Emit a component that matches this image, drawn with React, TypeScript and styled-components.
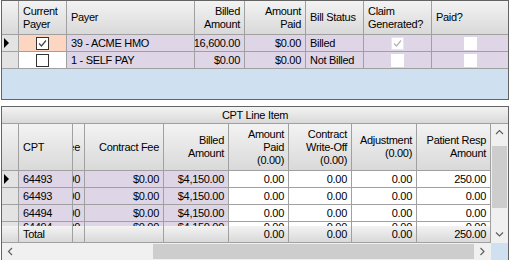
import React from "react";
import styled, { createGlobalStyle, css } from "styled-components";

const LINE = "#a0a0a0";
const FRAME = "#646464";
const LAVENDER = "#ded6e6";
const PEACH = "#fcd6c0";
const EMPTY = "#cfe0f1";
const ROWHEAD = "#e3e3e3";
const HEAD_BG = "linear-gradient(to bottom, #f3f3f3, #d9d9d9)";

const TOP_COLS = "17px 48px 128px 50px 61px 58px 68px 76px";
const CPT_COLS = "17px 54px 12px 79px 65px 60px 63px 65px 74px";

const GlobalStyle = createGlobalStyle`
  body {
    margin: 0;
    background: #ffffff;
    font-family: "Liberation Sans", Arial, sans-serif;
    font-size: 11px;
    letter-spacing: -0.3px;
    color: #000;
  }
  * { box-sizing: border-box; }
`;

type Align = "left" | "right" | "center";
type Check = "checked" | "unchecked" | "disabled" | "plain";

const Page = styled.div`
  width: 510px;
  padding-left: 1px;
  display: flex;
  flex-direction: column;
  gap: 6px;
`;

const Frame = styled.div<{ $h: number }>`
  width: 508px;
  height: ${(p) => p.$h}px;
  border: 1px solid ${FRAME};
  display: flex;
  flex-direction: column;
  overflow: hidden;
`;

const Row = styled.div<{ $cols: string; $h: number }>`
  display: grid;
  grid-template-columns: ${(p) => p.$cols};
  height: ${(p) => p.$h}px;
  flex-shrink: 0;
  overflow: hidden;
`;

const Cell = styled.div<{ $align?: Align; $bg?: string; $last?: boolean }>`
  display: flex;
  align-items: center;
  justify-content: ${(p) =>
    p.$align === "right" ? "flex-end" : p.$align === "center" ? "center" : "flex-start"};
  text-align: ${(p) => p.$align || "left"};
  padding: 0 4px;
  white-space: nowrap;
  overflow: hidden;
  background: ${(p) => p.$bg || "#ffffff"};
  border-bottom: 1px solid ${LINE};
  border-right: ${(p) => (p.$last ? "none" : `1px solid ${LINE}`)};
  line-height: 13px;
`;

const HeadCell = styled(Cell)`
  background: ${HEAD_BG};
  white-space: normal;
`;

const RowHead = styled(Cell)`
  background: ${ROWHEAD};
  padding: 0 0 0 2px;
`;

const PartialRow = styled(Row)`
  ${Cell} {
    align-items: flex-start;
    line-height: 8px;
    padding-top: 1px;
    border-bottom: none;
  }
`;

const Filler = styled.div`
  flex: 1;
  background: ${EMPTY};
`;

const Band = styled.div`
  height: 17px;
  flex-shrink: 0;
  background: ${HEAD_BG};
  border-bottom: 1px solid ${LINE};
  display: flex;
  align-items: center;
  justify-content: center;
`;

const Body = styled.div`
  display: flex;
  height: 119px;
  flex-shrink: 0;
`;

const TableArea = styled.div`
  flex: 1;
  display: flex;
  flex-direction: column;
  overflow: hidden;
`;

const VScroll = styled.div`
  width: 17px;
  display: flex;
  flex-direction: column;
  background: #f0f0f0;
`;

const HScroll = styled.div`
  height: 17px;
  display: flex;
  flex-shrink: 0;
  background: #f0f0f0;
`;

const ArrowBtn = styled.div<{ $v?: boolean }>`
  width: 17px;
  height: 17px;
  flex-shrink: 0;
  display: flex;
  align-items: center;
  justify-content: center;
`;

const Track = styled.div<{ $v?: boolean; $start: number; $size?: number }>`
  flex: 1;
  display: flex;
  flex-direction: ${(p) => (p.$v ? "column" : "row")};
  ${(p) =>
    p.$v
      ? css`
          padding: ${p.$start}px 1px 0 1px;
        `
      : css`
          padding: 1px 0 1px ${p.$start}px;
        `}
`;

const Thumb = styled.div<{ $size?: number }>`
  background: #cdcdcd;
  ${(p) => (p.$size ? `flex: 0 0 ${p.$size}px;` : "flex: 1;")}
`;

const Corner = styled.div`
  width: 17px;
  background: ${EMPTY};
`;

const Box = styled.span<{ $kind: Check }>`
  width: 13px;
  height: 13px;
  display: block;
  background: #ffffff;
  border: 1px solid
    ${(p) =>
      p.$kind === "checked" || p.$kind === "unchecked"
        ? "#333333"
        : p.$kind === "disabled"
        ? "#e6e6e6"
        : "#ffffff"};
  svg {
    display: block;
  }
`;

function CheckBox({ kind }: { kind: Check }) {
  const stroke = kind === "checked" ? "#444444" : "#b4b4b4";
  return (
    <Box $kind={kind}>
      {(kind === "checked" || kind === "disabled") && (
        <svg width="11" height="11" viewBox="0 0 11 11">
          <polyline points="2,5.5 4.5,8 9,2.5" fill="none" stroke={stroke} strokeWidth="1.2" />
        </svg>
      )}
    </Box>
  );
}

function Pointer() {
  return (
    <svg width="5" height="10" viewBox="0 0 5 10">
      <polygon points="0,0 5,5 0,10" fill="#000" />
    </svg>
  );
}

function Chevron({ dir }: { dir: "up" | "down" | "left" | "right" }) {
  const pts = {
    up: "1,5 4.5,1.5 8,5",
    down: "1,1.5 4.5,5 8,1.5",
    left: "5,1 1.5,4.5 5,8",
    right: "1.5,1 5,4.5 1.5,8",
  }[dir];
  const vertical = dir === "up" || dir === "down";
  return (
    <svg width={vertical ? 9 : 7} height={vertical ? 7 : 9} viewBox={vertical ? "0 0 9 7" : "0 0 7 9"}>
      <polyline points={pts} fill="none" stroke="#606060" strokeWidth="1.2" />
    </svg>
  );
}

const payers = [
  { current: "checked" as Check, name: "39 - ACME HMO", billed: "$16,600.00", paid: "$0.00", status: "Billed", claim: "disabled" as Check, active: true },
  { current: "unchecked" as Check, name: "1 - SELF PAY", billed: "$0.00", paid: "$0.00", status: "Not Billed", claim: "plain" as Check, active: false },
];

const lines = [
  { cpt: "64493", resp: "250.00", active: true },
  { cpt: "64493", resp: "0.00", active: false },
  { cpt: "64494", resp: "0.00", active: false },
];

function PayerGrid() {
  return (
    <Frame $h={100}>
      <Row $cols={TOP_COLS} $h={34}>
        <HeadCell />
        <HeadCell>Current<br />Payer</HeadCell>
        <HeadCell>Payer</HeadCell>
        <HeadCell $align="right">Billed<br />Amount</HeadCell>
        <HeadCell $align="right">Amount<br />Paid</HeadCell>
        <HeadCell>Bill Status</HeadCell>
        <HeadCell>Claim<br />Generated?</HeadCell>
        <HeadCell $last>Paid?</HeadCell>
      </Row>
      {payers.map((p) => (
        <Row key={p.name} $cols={TOP_COLS} $h={17}>
          <RowHead>{p.active && <Pointer />}</RowHead>
          <Cell $align="center" $bg={p.active ? PEACH : "#ffffff"}>
            <CheckBox kind={p.current} />
          </Cell>
          <Cell $bg={LAVENDER}>{p.name}</Cell>
          <Cell $align="right" $bg={LAVENDER}>{p.billed}</Cell>
          <Cell $align="right" $bg={LAVENDER}>{p.paid}</Cell>
          <Cell $bg={LAVENDER}>{p.status}</Cell>
          <Cell $align="center" $bg={LAVENDER}>
            <CheckBox kind={p.claim} />
          </Cell>
          <Cell $align="center" $bg={LAVENDER} $last>
            <CheckBox kind="plain" />
          </Cell>
        </Row>
      ))}
      <Filler />
    </Frame>
  );
}

function LineCells({ cpt, resp }: { cpt: string; resp: string }) {
  return (
    <>
      <Cell $bg={LAVENDER}>{cpt}</Cell>
      <Cell $align="right" $bg={LAVENDER}>$0.00</Cell>
      <Cell $align="right" $bg={LAVENDER}>$0.00</Cell>
      <Cell $align="right" $bg={LAVENDER}>$4,150.00</Cell>
      <Cell $align="right">0.00</Cell>
      <Cell $align="right">0.00</Cell>
      <Cell $align="right">0.00</Cell>
      <Cell $align="right">{resp}</Cell>
    </>
  );
}

function CptGrid() {
  return (
    <Frame $h={155}>
      <Band>CPT Line Item</Band>
      <Body>
        <TableArea>
          <Row $cols={CPT_COLS} $h={47}>
            <HeadCell />
            <HeadCell>CPT</HeadCell>
            <HeadCell $align="right">Fee</HeadCell>
            <HeadCell $align="right">Contract Fee</HeadCell>
            <HeadCell $align="right">Billed<br />Amount</HeadCell>
            <HeadCell $align="right">Amount<br />Paid<br />(0.00)</HeadCell>
            <HeadCell $align="right">Contract<br />Write-Off<br />(0.00)</HeadCell>
            <HeadCell $align="right">Adjustment<br />(0.00)</HeadCell>
            <HeadCell $align="right">Patient Resp<br />Amount</HeadCell>
          </Row>
          {lines.map((l, i) => (
            <Row key={i} $cols={CPT_COLS} $h={17}>
              <RowHead>{l.active && <Pointer />}</RowHead>
              <LineCells cpt={l.cpt} resp={l.resp} />
            </Row>
          ))}
          <PartialRow $cols={CPT_COLS} $h={4}>
            <RowHead />
            <LineCells cpt="64494" resp="0.00" />
          </PartialRow>
          <Row $cols={CPT_COLS} $h={17}>
            <HeadCell />
            <HeadCell>Total</HeadCell>
            <HeadCell />
            <HeadCell />
            <HeadCell />
            <HeadCell $align="right">0.00</HeadCell>
            <HeadCell $align="right">0.00</HeadCell>
            <HeadCell $align="right">0.00</HeadCell>
            <HeadCell $align="right">250.00</HeadCell>
          </Row>
        </TableArea>
        <VScroll>
          <ArrowBtn $v>
            <Chevron dir="up" />
          </ArrowBtn>
          <Track $v $start={5}>
            <Thumb $size={62} />
          </Track>
          <ArrowBtn $v>
            <Chevron dir="down" />
          </ArrowBtn>
        </VScroll>
      </Body>
      <HScroll>
        <ArrowBtn>
          <Chevron dir="left" />
        </ArrowBtn>
        <Track $start={134}>
          <Thumb />
        </Track>
        <ArrowBtn>
          <Chevron dir="right" />
        </ArrowBtn>
        <Corner />
      </HScroll>
    </Frame>
  );
}

export default function App() {
  return (
    <>
      <GlobalStyle />
      <Page>
        <PayerGrid />
        <CptGrid />
      </Page>
    </>
  );
}
